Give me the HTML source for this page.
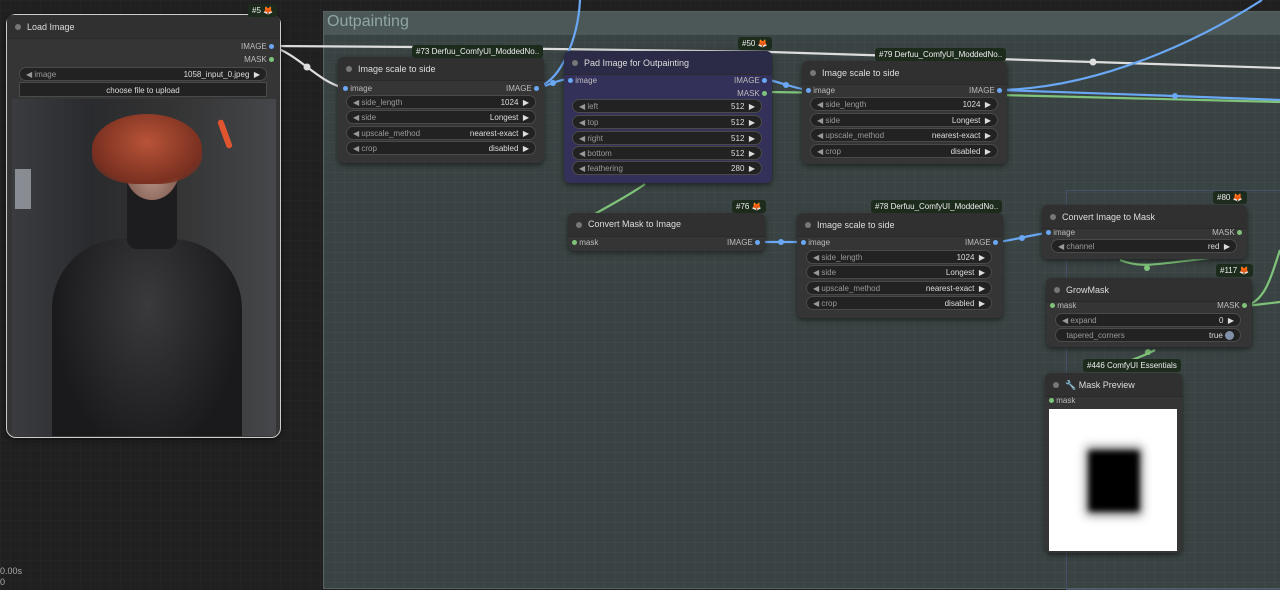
<!DOCTYPE html>
<html><head><meta charset="utf-8"><style>
*{box-sizing:border-box;margin:0;padding:0}
body{width:1280px;height:590px;overflow:hidden;background:#202020;font-family:"Liberation Sans",sans-serif;position:relative;
background-image:linear-gradient(#242424 1px,transparent 1px),linear-gradient(90deg,#242424 1px,transparent 1px);background-size:10px 10px}
.grp{position:absolute;left:323px;top:11px;width:960px;height:578px;background:#3a4343;border:1px solid #556262;
background-image:linear-gradient(rgba(255,255,255,.025) 1px,transparent 1px),linear-gradient(90deg,rgba(255,255,255,.025) 1px,transparent 1px);background-size:10px 10px}
.grp .h{height:23px;background:#4b5857;color:#8fa6a4;font-size:16px;padding:1px 3px}
.n{position:absolute;background:#353535;border-radius:6px;box-shadow:0 2px 6px rgba(0,0,0,.5);font-size:8px;color:#ccc}
.n .t{height:24px;background:#303030;border-radius:6px 6px 0 0;color:#ddd;font-size:9px;padding:7px 0 0 20px;position:relative;border-bottom:1px solid #2a2a2a}
.n .t:before{content:"";position:absolute;left:8px;top:9px;width:6px;height:6px;border-radius:50%;background:#777}
.s{position:absolute;font-size:8px;color:#bbb}
.dot{display:inline-block;width:5px;height:5px;border-radius:50%;vertical-align:middle}
.b{background:#6aa8f5}.g{background:#7fc47a}
.w{position:absolute;height:14px;background:#222;border:1px solid #4a4a4a;border-radius:7px;font-size:8px;color:#999;padding:2px 6px;display:flex;justify-content:space-between}
.w span:last-child{color:#ddd}
.bd{position:absolute;height:13px;background:#1d2b1d;color:#eee;font-size:8px;border-radius:3px;padding:2px 4px;white-space:nowrap}
</style></head><body>
<div class="grp"><div class="h">Outpainting</div></div>
<div style="position:absolute;left:1066px;top:190px;width:220px;height:400px;border:1px solid #46506a"></div>

<svg style="position:absolute;left:0;top:0" width="1280" height="590">
<g fill="none" stroke-width="2.2">
<path d="M271 46 L412 47 L770 52 L1093 62 L1280 68" stroke="#ddd"/>
<path d="M271 46 C300 55 315 80 344 88" stroke="#ddd"/>
<path d="M580 0 C578 40 560 80 540 86" stroke="#6aa8f5"/>
<path d="M545 86 C555 82 560 80 568 79" stroke="#6aa8f5"/>
<path d="M766 79 C785 84 795 88 807 90" stroke="#6aa8f5"/>
<path d="M1000 90 C1100 88 1200 40 1262 0" stroke="#6aa8f5"/>
<path d="M1000 90 L1175 96 L1280 100" stroke="#6aa8f5"/>
<path d="M766 92 L1000 95 L1280 102" stroke="#7fc47a"/>
<path d="M645 184 C630 195 610 205 595 214" stroke="#7fc47a"/>
<path d="M760 242 L803 242" stroke="#6aa8f5"/>
<path d="M998 242 C1015 240 1030 235 1047 233" stroke="#6aa8f5"/>
<path d="M1120 260 C1140 268 1150 265 1210 258" stroke="#7fc47a"/>
<path d="M1246 306 C1265 300 1270 280 1280 250" stroke="#7fc47a"/>
<path d="M1246 306 L1280 302" stroke="#7fc47a"/>
<path d="M1155 350 C1140 358 1125 362 1110 368" stroke="#7fc47a"/>
</g>
<g fill="#ddd"><circle cx="307" cy="67" r="3.5"/><circle cx="1093" cy="62" r="3.5"/></g>
<g fill="#6aa8f5"><circle cx="553" cy="83" r="3"/><circle cx="786" cy="85" r="3"/><circle cx="1175" cy="96" r="3"/><circle cx="781" cy="242" r="3"/><circle cx="1022" cy="238" r="3"/></g>
<g fill="#7fc47a"><circle cx="1147" cy="268" r="3"/><circle cx="1148" cy="352" r="3"/></g>
</svg>

<!-- Load Image -->
<div class="n" style="left:6px;top:14px;width:275px;height:424px;border:1.5px solid #ccc;border-radius:10px">
<div class="t">Load Image</div>
<div class="s" style="right:6px;top:27px">IMAGE <span class="dot b"></span></div>
<div class="s" style="right:6px;top:40px">MASK <span class="dot g"></span></div>
<div class="w" style="left:12px;top:52px;width:248px"><span>◀ image</span><span>1058_input_0.jpeg &nbsp;▶</span></div>
<div style="position:absolute;left:12px;top:67px;width:248px;height:15px;background:#222;border:1px solid #4a4a4a;color:#ddd;font-size:8px;text-align:center;padding-top:3px">choose file to upload</div>
<div style="position:absolute;left:5px;top:84px;width:264px;height:337px;overflow:hidden;background:linear-gradient(90deg,#3a3c40,#2a2b2e 30%,#333 60%,#45474a 100%)">
<div style="position:absolute;left:40px;top:140px;width:190px;height:220px;border-radius:70px 70px 0 0;background:radial-gradient(ellipse at 50% 30%,#3a3a3c,#1a1a1c 70%)"></div>
<div style="position:absolute;left:115px;top:60px;width:50px;height:90px;background:#1d1d1f;border-radius:10px"></div>
<div style="position:absolute;left:112px;top:35px;width:56px;height:66px;border-radius:50%;background:radial-gradient(ellipse at 50% 60%,#b8978a,#8a6458 60%)"></div>
<div style="position:absolute;left:80px;top:15px;width:110px;height:70px;border-radius:50% 50% 40% 40%;background:radial-gradient(ellipse at 50% 40%,#b85438,#7a3020 70%,transparent 100%)"></div>
<div style="position:absolute;left:210px;top:20px;width:6px;height:30px;background:#e05530;border-radius:3px;transform:rotate(-20deg)"></div>
<div style="position:absolute;left:3px;top:70px;width:16px;height:40px;background:#bcc4cc;opacity:.6"></div>
</div>
</div>
<div class="bd" style="left:248px;top:4px">#5 🦊</div>

<!-- #73 -->
<div class="n" style="left:338px;top:57px;width:206px;height:106px">
<div class="t">Image scale to side</div>
<div class="s" style="left:5px;top:27px"><span class="dot b"></span> image</div>
<div class="s" style="right:5px;top:27px">IMAGE <span class="dot b"></span></div>
<div class="w" style="left:8px;top:38px;width:190px"><span>◀ side_length</span><span>1024 &nbsp;▶</span></div>
<div class="w" style="left:8px;top:53px;width:190px"><span>◀ side</span><span>Longest &nbsp;▶</span></div>
<div class="w" style="left:8px;top:69px;width:190px"><span>◀ upscale_method</span><span>nearest-exact &nbsp;▶</span></div>
<div class="w" style="left:8px;top:84px;width:190px"><span>◀ crop</span><span>disabled &nbsp;▶</span></div>
</div>
<div class="bd" style="left:412px;top:45px">#73 Derfuu_ComfyUI_ModdedNo..</div>

<!-- Pad -->
<div class="n" style="left:564px;top:51px;width:208px;height:132px;background:#33315a">
<div class="t" style="background:#2b2a47">Pad Image for Outpainting</div>
<div class="s" style="left:4px;top:25px"><span class="dot b"></span> image</div>
<div class="s" style="right:5px;top:25px">IMAGE <span class="dot b"></span></div>
<div class="s" style="right:5px;top:38px">MASK <span class="dot g"></span></div>
<div class="w" style="left:8px;top:48px;width:190px"><span>◀ left</span><span>512 &nbsp;▶</span></div>
<div class="w" style="left:8px;top:64px;width:190px"><span>◀ top</span><span>512 &nbsp;▶</span></div>
<div class="w" style="left:8px;top:80px;width:190px"><span>◀ right</span><span>512 &nbsp;▶</span></div>
<div class="w" style="left:8px;top:95px;width:190px"><span>◀ bottom</span><span>512 &nbsp;▶</span></div>
<div class="w" style="left:8px;top:110px;width:190px"><span>◀ feathering</span><span>280 &nbsp;▶</span></div>
</div>
<div class="bd" style="left:738px;top:37px">#50 🦊</div>

<!-- #79 -->
<div class="n" style="left:802px;top:61px;width:205px;height:103px">
<div class="t">Image scale to side</div>
<div class="s" style="left:4px;top:25px"><span class="dot b"></span> image</div>
<div class="s" style="right:5px;top:25px">IMAGE <span class="dot b"></span></div>
<div class="w" style="left:8px;top:36px;width:188px"><span>◀ side_length</span><span>1024 &nbsp;▶</span></div>
<div class="w" style="left:8px;top:52px;width:188px"><span>◀ side</span><span>Longest &nbsp;▶</span></div>
<div class="w" style="left:8px;top:67px;width:188px"><span>◀ upscale_method</span><span>nearest-exact &nbsp;▶</span></div>
<div class="w" style="left:8px;top:83px;width:188px"><span>◀ crop</span><span>disabled &nbsp;▶</span></div>
</div>
<div class="bd" style="left:875px;top:48px">#79 Derfuu_ComfyUI_ModdedNo..</div>

<!-- #76 -->
<div class="n" style="left:568px;top:213px;width:197px;height:38px">
<div class="t" style="padding-top:6px">Convert Mask to Image</div>
<div class="s" style="left:4px;top:25px"><span class="dot g"></span> mask</div>
<div class="s" style="right:5px;top:25px">IMAGE <span class="dot b"></span></div>
</div>
<div class="bd" style="left:732px;top:200px">#76 🦊</div>

<!-- #78 -->
<div class="n" style="left:797px;top:213px;width:206px;height:105px">
<div class="t">Image scale to side</div>
<div class="s" style="left:4px;top:25px"><span class="dot b"></span> image</div>
<div class="s" style="right:5px;top:25px">IMAGE <span class="dot b"></span></div>
<div class="w" style="left:9px;top:37px;width:186px"><span>◀ side_length</span><span>1024 &nbsp;▶</span></div>
<div class="w" style="left:9px;top:52px;width:186px"><span>◀ side</span><span>Longest &nbsp;▶</span></div>
<div class="w" style="left:9px;top:68px;width:186px"><span>◀ upscale_method</span><span>nearest-exact &nbsp;▶</span></div>
<div class="w" style="left:9px;top:83px;width:186px"><span>◀ crop</span><span>disabled &nbsp;▶</span></div>
</div>
<div class="bd" style="left:871px;top:200px">#78 Derfuu_ComfyUI_ModdedNo..</div>

<!-- #80 -->
<div class="n" style="left:1042px;top:205px;width:205px;height:54px">
<div class="t">Convert Image to Mask</div>
<div class="s" style="left:4px;top:23px"><span class="dot b"></span> image</div>
<div class="s" style="right:5px;top:23px">MASK <span class="dot g"></span></div>
<div class="w" style="left:9px;top:34px;width:186px"><span>◀ channel</span><span>red &nbsp;▶</span></div>
</div>
<div class="bd" style="left:1213px;top:191px">#80 🦊</div>

<!-- #117 -->
<div class="n" style="left:1046px;top:278px;width:206px;height:69px">
<div class="t">GrowMask</div>
<div class="s" style="left:4px;top:23px"><span class="dot g"></span> mask</div>
<div class="s" style="right:5px;top:23px">MASK <span class="dot g"></span></div>
<div class="w" style="left:9px;top:35px;width:186px"><span>◀ expand</span><span>0 &nbsp;▶</span></div>
<div class="w" style="left:9px;top:50px;width:186px"><span>&nbsp;&nbsp;tapered_corners</span><span>true <span class="dot" style="background:#8090a8;width:9px;height:9px"></span></span></div>
</div>
<div class="bd" style="left:1216px;top:264px">#117 🦊</div>

<!-- Mask Preview -->
<div class="n" style="left:1045px;top:373px;width:137px;height:180px">
<div class="t">🔧 Mask Preview</div>
<div class="s" style="left:4px;top:23px"><span class="dot g"></span> mask</div>
<div style="position:absolute;left:4px;top:36px;width:128px;height:142px;background:#fff;overflow:hidden">
<div style="position:absolute;left:37px;top:38px;width:56px;height:68px;background:#777;filter:blur(5px)"></div>
<div style="position:absolute;left:40px;top:42px;width:50px;height:60px;background:#000;filter:blur(3px)"></div>
</div>
</div>
<div class="bd" style="left:1083px;top:359px">#446 ComfyUI Essentials</div>

<div style="position:absolute;left:0;top:566px;color:#aaa;font-size:9px;line-height:11px">0.00s<br>0</div>
</body></html>
